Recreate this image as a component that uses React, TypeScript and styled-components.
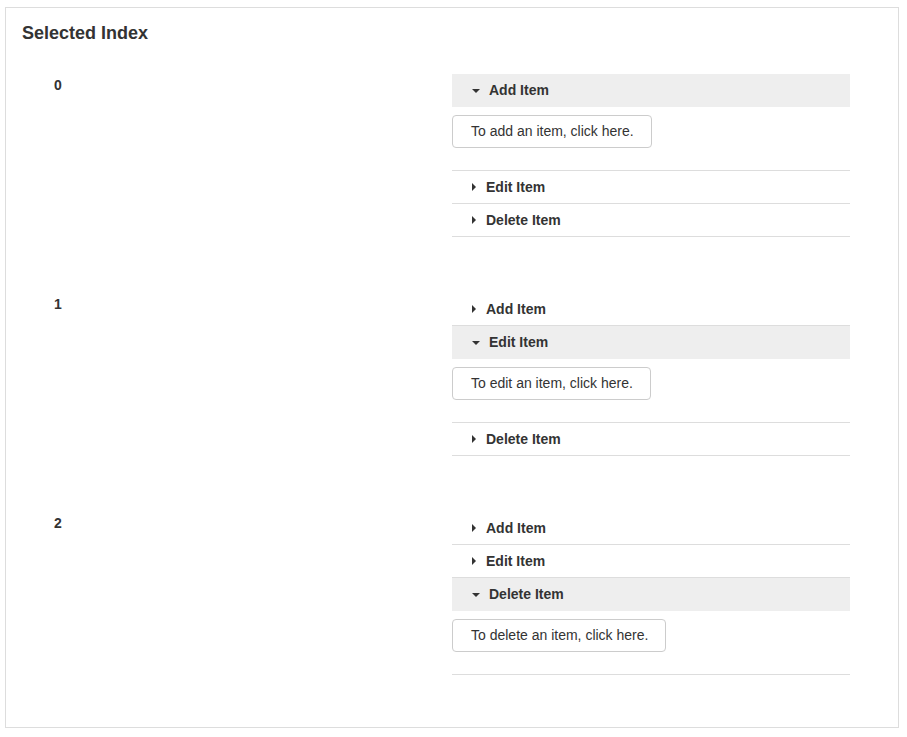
import React, { useState } from "react";
import styled, { createGlobalStyle } from "styled-components";

const GlobalStyle = createGlobalStyle`
  html, body {
    margin: 0;
    padding: 0;
    background: #ffffff;
  }
  body {
    font-family: "Liberation Sans", Arial, Helvetica, sans-serif;
    font-size: 14px;
    line-height: 20px;
    color: #333333;
  }
  * { box-sizing: border-box; }
`;

const Panel = styled.div`
  margin: 7px 0 0 5px;
  width: 894px;
  border: 1px solid #dddddd;
  padding: 16px 16px 52px 16px;
  background: #ffffff;
`;

const Title = styled.div`
  font-size: 18px;
  font-weight: 700;
  line-height: 18px;
  color: #333333;
  margin-bottom: 32px;
`;

const Groups = styled.div`
  display: flex;
  flex-direction: column;
  gap: 56px;
`;

const Group = styled.div`
  display: grid;
  grid-template-columns: 1fr 1fr;
`;

const IndexCell = styled.div`
  padding-left: 32px;
  font-size: 14px;
  font-weight: 700;
  line-height: 20px;
  padding-top: 1px;
  color: #333333;
`;

const AccordionCell = styled.div`
  padding-right: 32px;
`;

const Item = styled.div`
  border-bottom: 1px solid #dddddd;
`;

const Header = styled.div<{ $open: boolean }>`
  display: flex;
  align-items: center;
  height: ${(p) => (p.$open ? "33px" : "32px")};
  padding: 6px 0 0 20px;
  align-items: flex-start;
  background: ${(p) => (p.$open ? "#eeeeee" : "transparent")};
  font-size: 14px;
  font-weight: 700;
  line-height: 20px;
  color: #333333;
  cursor: pointer;
  user-select: none;
`;

const Caret = styled.span<{ $open: boolean }>`
  display: inline-block;
  align-self: center;
  width: 0;
  height: 0;
  border-style: solid;
  border-color: transparent;
  ${(p) =>
    p.$open
      ? `border-width: 4px 4px 0 4px; border-top-color: #333333; margin: 0 9px 6px 0;`
      : `border-width: 4px 0 4px 4px; border-left-color: #333333; margin: 0 10px 6px 0;`}
`;

const Content = styled.div`
  padding: 8px 0 22px 0;
`;

const ActionButton = styled.button`
  display: inline-flex;
  align-items: center;
  height: 33px;
  padding: 0 17px 1px 18px;
  margin: 0;
  border: 1px solid #cccccc;
  border-radius: 4px;
  background: #ffffff;
  font-family: "Liberation Sans", Arial, Helvetica, sans-serif;
  font-size: 14px;
  line-height: 20px;
  color: #333333;
  cursor: pointer;
`;

const sections = [
  { title: "Add Item", text: "To add an item, click here." },
  { title: "Edit Item", text: "To edit an item, click here." },
  { title: "Delete Item", text: "To delete an item, click here." },
];

function Accordion({ initial }: { initial: number }) {
  const [open, setOpen] = useState<number>(initial);
  return (
    <AccordionCell>
      {sections.map((s, i) => {
        const isOpen = open === i;
        return (
          <Item key={s.title}>
            <Header $open={isOpen} onClick={() => setOpen(isOpen ? -1 : i)}>
              <Caret $open={isOpen} />
              {s.title}
            </Header>
            {isOpen && (
              <Content>
                <ActionButton type="button">{s.text}</ActionButton>
              </Content>
            )}
          </Item>
        );
      })}
    </AccordionCell>
  );
}

export default function App() {
  return (
    <>
      <GlobalStyle />
      <Panel>
        <Title>Selected Index</Title>
        <Groups>
          {[0, 1, 2].map((n) => (
            <Group key={n}>
              <IndexCell>{n}</IndexCell>
              <Accordion initial={n} />
            </Group>
          ))}
        </Groups>
      </Panel>
    </>
  );
}
